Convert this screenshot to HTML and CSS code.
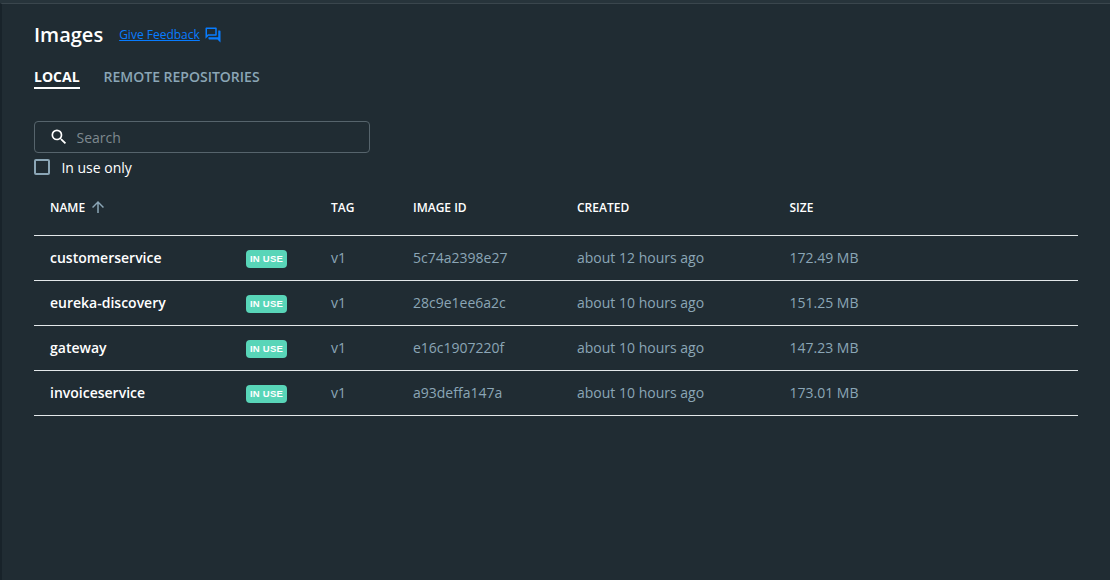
FILE: index.html
```html
<!DOCTYPE html>
<html lang="en">
<head>
<meta charset="utf-8">
<title>Images</title>
<link rel="stylesheet" href="styles.css">
</head>
<body>
<main class="page">
  <header class="header">
    <h1 class="title">Images</h1>
    <a class="feedback" href="#"><span class="feedback-text">Give Feedback</span>
      <svg class="feedback-icon" viewBox="0 0 24 24"><path d="M15 4v7H5.17L4 12.17V4h11m1-2H3c-.55 0-1 .45-1 1v14l4-4h10c.55 0 1-.45 1-1V3c0-.55-.45-1-1-1zm5 4h-2v9H6v2c0 .55.45 1 1 1h11l4 4V7c0-.55-.45-1-1-1z"/></svg>
    </a>
  </header>
  <nav class="tabs">
    <a class="tab tab-active">LOCAL</a>
    <a class="tab">REMOTE REPOSITORIES</a>
  </nav>
  <div class="search">
    <svg class="search-icon" viewBox="0 0 24 24"><path d="M15.5 14h-.79l-.28-.27A6.471 6.471 0 0 0 16 9.5 6.5 6.5 0 1 0 9.5 16c1.61 0 3.09-.59 4.23-1.57l.27.28v.79l5 4.99L20.49 19l-4.99-5zm-6 0C7.01 14 5 11.99 5 9.5S7.01 5 9.5 5 14 7.01 14 9.5 11.99 14 9.5 14z"/></svg>
    <span class="placeholder">Search</span>
  </div>
  <div class="filter"><span class="checkbox"></span><span class="filter-text">In use only</span></div>
  <section class="table">
    <div class="row head">
      <span class="sort">NAME <svg class="arrow" viewBox="0 0 24 24"><path d="M4 12l1.41 1.41L11 7.83V20h2V7.83l5.58 5.59L20 12l-8-8-8 8z"/></svg></span><span></span><span>TAG</span><span>IMAGE ID</span><span>CREATED</span><span>SIZE</span>
    </div>
    <div class="row"><span class="name">customerservice</span><span class="badge">IN USE</span><span>v1</span><span>5c74a2398e27</span><span>about 12 hours ago</span><span>172.49 MB</span></div>
    <div class="row"><span class="name">eureka-discovery</span><span class="badge">IN USE</span><span>v1</span><span>28c9e1ee6a2c</span><span>about 10 hours ago</span><span>151.25 MB</span></div>
    <div class="row"><span class="name">gateway</span><span class="badge">IN USE</span><span>v1</span><span>e16c1907220f</span><span>about 10 hours ago</span><span>147.23 MB</span></div>
    <div class="row"><span class="name">invoiceservice</span><span class="badge">IN USE</span><span>v1</span><span>a93deffa147a</span><span>about 10 hours ago</span><span>173.01 MB</span></div>
  </section>
</main>
</body>
</html>
```
FILE: styles.css
```css
* { box-sizing: border-box; }
body { margin: 0; background: #202c33; border-top: 3px solid #27343b; font-family: "Open Sans", sans-serif; font-size: 14px; color: #fff; }
.page { height: 577px; padding: 16px 32px 0; border-top: 1px solid #3a464d; border-left: 2px solid #18232a; }
.header { display: flex; align-items: center; gap: 16px; height: 30px; }
.title { margin: 0; font-size: 20px; font-weight: 600; line-height: 30px; }
.feedback { display: flex; align-items: center; gap: 4px; padding-bottom: 1px; color: #087cff; font-size: 12px; }
.feedback-icon { width: 18px; height: 18px; fill: currentColor; }
.tabs { display: flex; gap: 24px; margin-top: 15px; height: 24px; }
.tab { height: 24px; line-height: 23px; font-size: 14px; font-weight: 600; color: #8ba6b6; }
.tab-active { color: #fff; font-weight: 700; border-bottom: 2px solid #fff; }
.search { display: flex; align-items: center; gap: 8px; width: 336px; height: 32px; margin-top: 32px; padding-left: 13.5px; border: 1px solid #56646c; border-radius: 4px; }
.search-icon { width: 20px; height: 20px; fill: #fff; }
.placeholder { color: #7e898f; }
.filter { display: flex; align-items: center; gap: 11px; height: 30px; padding-bottom: 1px; }
.filter-text { line-height: 19px; }
.checkbox { width: 16px; height: 16px; margin: 0 .4px 1px 0; border: 2px solid #8ba6b6; border-radius: 2px; }
.row { display: grid; grid-template-columns: 196px 85px 82px 164px 212.5px 1fr; align-items: center; height: 45px; width: 1044px; padding: 0 0 2px 16px; border-bottom: 1px solid #e3e8ea; color: #8ba6b6; }
.head { height: 53px; padding-bottom: 4px; color: #fff; font-size: 12px; font-weight: 600; }
.sort { display: flex; align-items: center; gap: 4px; }
.arrow { width: 18px; height: 18px; fill: #8ba6b6; }
.name { color: #fff; font-weight: 600; }
.badge { width: 41px; height: 18px; margin-top: 3px; border-radius: 4px; background: #58d5b8; color: #fff; font: 700 9.5px/18px "Liberation Sans", sans-serif; letter-spacing: .25px; text-align: center; }
```
